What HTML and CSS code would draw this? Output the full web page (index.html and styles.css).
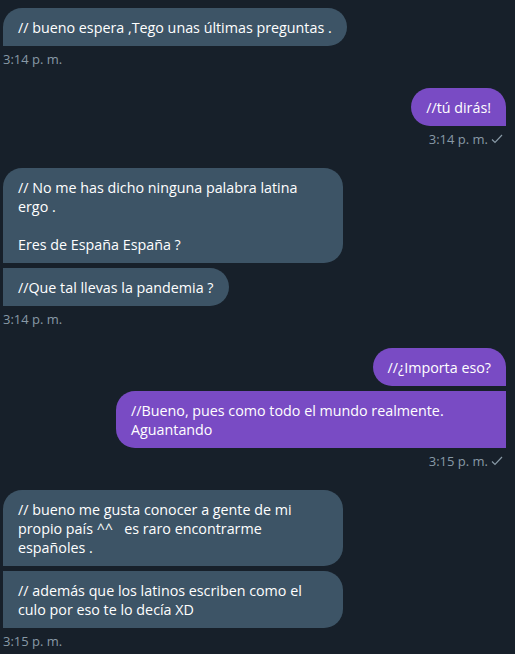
FILE: index.html
```html
<!DOCTYPE html>
<html lang="es">
<head>
<meta charset="utf-8">
<title>Mensajes</title>
<link rel="stylesheet" href="styles.css">
</head>
<body>
<main class="chat">
  <section class="group in">
    <div class="bubble first">// bueno espera ,Tego unas últimas preguntas .</div>
    <div class="time">3:14 p. m.</div>
  </section>

  <section class="group out">
    <div class="bubble first">//tú dirás!</div>
    <div class="time">3:14 p. m. <svg class="check" viewBox="0 0 12 10" width="12" height="10"><polyline points="1,5.5 4,8.5 11,1" /></svg></div>
  </section>

  <section class="group in">
    <div class="bubble first wide-in">// No me has dicho ninguna palabra latina<br>ergo .<br><br>Eres de España España ?</div>
    <div class="bubble next">//Que tal llevas la pandemia ?</div>
    <div class="time">3:14 p. m.</div>
  </section>

  <section class="group out">
    <div class="bubble first">//¿Importa eso?</div>
    <div class="bubble next wide-out">//Bueno, pues como todo el mundo realmente.<br>Aguantando</div>
    <div class="time">3:15 p. m. <svg class="check" viewBox="0 0 12 10" width="12" height="10"><polyline points="1,5.5 4,8.5 11,1" /></svg></div>
  </section>

  <section class="group in">
    <div class="bubble first wide-in">// bueno me gusta conocer a gente de mi<br>propio país ^^ &nbsp; es raro encontrarme<br>españoles .</div>
    <div class="bubble next wide-in">// además que los latinos escriben como el<br>culo por eso te lo decía XD</div>
    <div class="time">3:15 p. m.</div>
  </section>
</main>
</body>
</html>
```

FILE: styles.css
```css
html, body {
  margin: 0;
  padding: 0;
  background: #17202a;
}

body {
  font-family: "Open Sans", "Noto Sans", sans-serif;
  color: #ffffff;
}

.chat {
  display: flex;
  flex-direction: column;
  gap: 21px;
  padding: 8px 9px 0 3px;
}

.group {
  display: flex;
  flex-direction: column;
  gap: 5px;
}

.group.in {
  align-items: flex-start;
}

.group.out {
  align-items: flex-end;
}

.bubble {
  box-sizing: border-box;
  font-size: 14.3px;
  line-height: 19px;
  padding: 9.5px 15px;
  border-radius: 19px;
  white-space: nowrap;
}

.in .bubble {
  background: #3d5466;
  border-bottom-left-radius: 0;
}

.in .bubble.next {
  border-top-left-radius: 0;
}

.out .bubble {
  background: #794bc4;
  border-bottom-right-radius: 0;
}

.out .bubble.next {
  border-top-right-radius: 0;
}

.wide-in {
  width: 340px;
}

.wide-out {
  width: 390px;
}

.time {
  font-size: 13px;
  line-height: 16px;
  color: #8899a6;
  display: flex;
  align-items: center;
  gap: 3px;
}

.out .time {
  padding-right: 3px;
}

.check {
  fill: none;
  stroke: #8899a6;
  stroke-width: 1.2;
}
```
